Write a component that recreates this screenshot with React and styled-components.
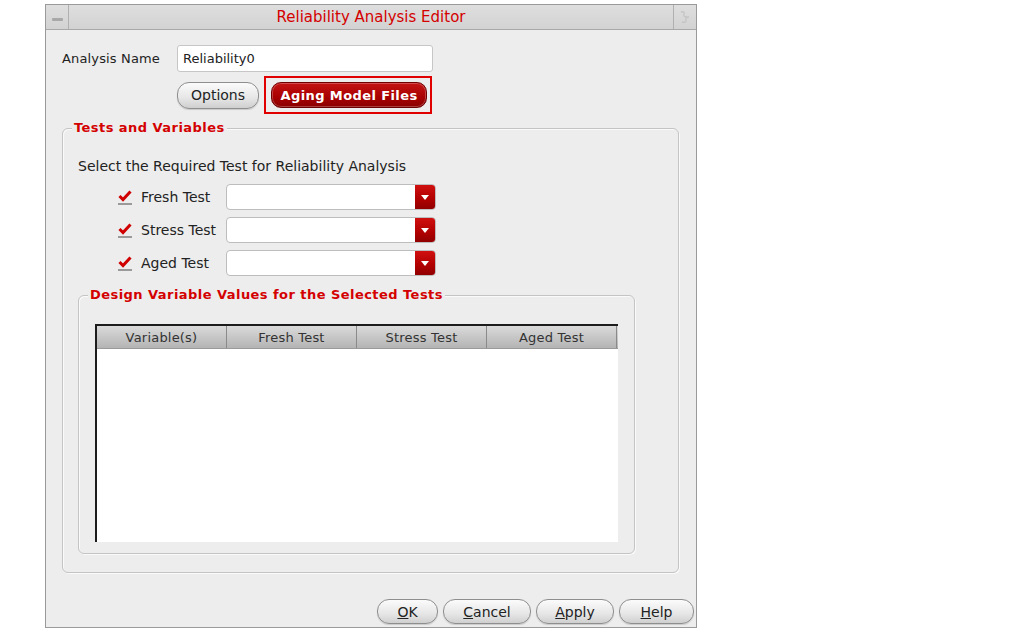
import React from "react"
import styled, { createGlobalStyle } from "styled-components"

const GlobalStyle = createGlobalStyle`
  body {
    margin: 0;
    background: #ffffff;
    font-family: "DejaVu Sans", "Liberation Sans", sans-serif;
  }
`

const Page = styled.div`
  width: 1013px;
  height: 631px;
  padding: 4px 0 0 45px;
  box-sizing: border-box;
`

const Window = styled.div`
  width: 652px;
  height: 624px;
  box-sizing: border-box;
  border: 1px solid #9a9a9a;
  background: #ededed;
  display: flex;
  flex-direction: column;
`

const TitleBar = styled.div`
  height: 24px;
  flex-shrink: 0;
  display: flex;
  border-bottom: 1px solid #a8a8a8;
  background: linear-gradient(#dedede, #d2d2d2);
`

const TitleButton = styled.div`
  width: 22px;
  display: flex;
  align-items: center;
  justify-content: center;
  border-${(p) => (p.$right ? "left" : "right")}: 1px solid #b0b0b0;
`

const Dash = styled.div`
  width: 11px;
  height: 3px;
  background: #a8a8a8;
  border-radius: 1px;
  margin-top: 4px;
`

const Title = styled.div`
  flex: 1;
  text-align: center;
  line-height: 24px;
  color: #d40000;
  font-size: 15px;
`

const Body = styled.div`
  flex: 1;
  display: flex;
  flex-direction: column;
  padding: 15px 0 3px 16px;
  min-height: 0;
`

const NameRow = styled.div`
  display: flex;
  align-items: center;
  gap: 17px;
`

const Label = styled.span`
  font-size: 13px;
  letter-spacing: 0.15px;
  color: #222;
`

const TextInput = styled.div`
  width: 256px;
  height: 27px;
  box-sizing: border-box;
  background: #fff;
  border: 1px solid #c6c6c6;
  border-radius: 3px;
  padding: 0 5px;
  display: flex;
  align-items: center;
  font-size: 13px;
  color: #222;
`

const ButtonsRow = styled.div`
  display: flex;
  align-items: center;
  margin: 4px 0 0 115px;
  gap: 5px;
`

const PillButton = styled.div`
  height: ${(p) => p.$h || 27}px;
  width: ${(p) => p.$w}px;
  box-sizing: border-box;
  border: 1px solid #8e8e8e;
  border-radius: 12px;
  background: linear-gradient(#fbfbfb, #e6e6e6 60%, #cfcfcf);
  box-shadow: 0 1px 1px rgba(0, 0, 0, 0.15);
  display: flex;
  align-items: center;
  justify-content: center;
  font-size: 14px;
  color: #222;
`

const Highlight = styled.div`
  border: 2px solid #e00000;
  padding: 4px 3px 4px 5px;
`

const RedButton = styled.div`
  height: 26px;
  width: 156px;
  box-sizing: border-box;
  border-radius: 10px;
  background: linear-gradient(#c41414, #a80000 60%, #8a0000);
  border: 1px solid #700000;
  box-shadow: inset 0 0 0 1px rgba(255, 255, 255, 0.25);
  display: flex;
  align-items: center;
  justify-content: center;
  color: #fff;
  font-weight: bold;
  font-size: 13px;
  letter-spacing: 0.4px;
`

const Group = styled.div`
  position: relative;
  flex: ${(p) => (p.$grow ? 1 : "none")};
  margin: ${(p) => p.$m || "0"};
  padding: ${(p) => p.$p || "0"};
  border: 1px solid #c4c4c4;
  border-radius: 6px;
  box-shadow: inset 1px 1px 0 #fafafa, 1px 1px 0 #fafafa;
  display: flex;
  flex-direction: column;
  min-height: 0;
`

const Legend = styled.span`
  position: absolute;
  top: -9px;
  left: 9px;
  padding: 0 2px;
  background: #ededed;
  color: #d40000;
  font-weight: bold;
  font-size: 13px;
  letter-spacing: 0.45px;
  line-height: 16px;
`

const Prompt = styled.div`
  font-size: 14px;
  line-height: 17px;
  color: #222;
  margin: 0 0 9px 0;
`

const TestRow = styled.div`
  display: flex;
  align-items: center;
  height: 26px;
  margin-bottom: 7px;
  padding-left: 40px;
`

const Check = styled.div`
  width: 14px;
  height: 14px;
  border-bottom: 2px solid #9a9a9a;
  margin-right: 9px;
  display: flex;
  align-items: center;
  justify-content: center;
`

const TestLabel = styled.span`
  width: 85px;
  font-size: 14px;
  color: #222;
`

const Combo = styled.div`
  width: 210px;
  height: 26px;
  display: flex;
  box-sizing: border-box;
  border: 1px solid #bdbdbd;
  border-radius: 4px;
  background: #fff;
  overflow: hidden;
`

const ComboField = styled.div`
  flex: 1;
`

const ComboArrow = styled.div`
  width: 20px;
  background: linear-gradient(#d01010, #b00000 60%, #900000);
  display: flex;
  align-items: center;
  justify-content: center;
`

const Table = styled.div`
  flex: 1;
  background: #fff;
  border-top: 2px solid #1c1c1c;
  border-left: 2px solid #1c1c1c;
  display: flex;
  flex-direction: column;
`

const HeaderRow = styled.div`
  display: grid;
  grid-template-columns: 130px 130px 130px 130px 1fr;
  height: 22px;
  background: linear-gradient(#dadada, #b4b4b4);
  border-bottom: 1px solid #9a9a9a;
`

const HeaderCell = styled.div`
  display: flex;
  align-items: center;
  justify-content: center;
  font-size: 13px;
  letter-spacing: 0.2px;
  color: #333;
  border-right: 1px solid #8a8a8a;
`

const Footer = styled.div`
  margin-top: 26px;
  display: flex;
  justify-content: flex-end;
  gap: 5px;
  padding-right: 2px;
`

const Mnemonic = styled.span`
  text-decoration: underline;
`

const CheckMark = () => (
  <svg width="14" height="12" viewBox="0 0 14 12">
    <path d="M1.5 6 L5 9.5 L12.5 1.5" fill="none" stroke="#d00000" strokeWidth="3" />
  </svg>
)

const MaxIcon = () => (
  <svg width="12" height="14" viewBox="0 0 12 14">
    <path d="M2 2 Q6 1 5 4 Q4 7 8 7 M10 7 Q6 7 7 10 Q8 13 3 12" fill="none" stroke="#c4c4c4" strokeWidth="1.3" />
  </svg>
)

const tests = ["Fresh Test", "Stress Test", "Aged Test"]

const App = () => {
  return (
    <Page>
      <GlobalStyle />
      <Window>
        <TitleBar>
          <TitleButton>
            <Dash />
          </TitleButton>
          <Title>Reliability Analysis Editor</Title>
          <TitleButton $right>
            <MaxIcon />
          </TitleButton>
        </TitleBar>
        <Body>
          <NameRow>
            <Label>Analysis Name</Label>
            <TextInput>Reliability0</TextInput>
          </NameRow>
          <ButtonsRow>
            <PillButton $w={82}>Options</PillButton>
            <Highlight>
              <RedButton>Aging Model Files</RedButton>
            </Highlight>
          </ButtonsRow>
          <Group $grow $m="14px 17px 0 0" $p="29px 15px 18px 15px">
            <Legend>Tests and Variables</Legend>
            <Prompt>Select the Required Test for Reliability Analysis</Prompt>
            {tests.map((t) => (
              <TestRow key={t}>
                <Check>
                  <CheckMark />
                </Check>
                <TestLabel>{t}</TestLabel>
                <Combo>
                  <ComboField />
                  <ComboArrow>
                    <svg width="8" height="5" viewBox="0 0 8 5">
                      <path d="M0 0 H8 L4 5 Z" fill="#fff" />
                    </svg>
                  </ComboArrow>
                </Combo>
              </TestRow>
            ))}
            <Group $grow $m="12px 28px 0 0" $p="28px 16px 11px 16px">
              <Legend>Design Variable Values for the Selected Tests</Legend>
              <Table>
                <HeaderRow>
                  <HeaderCell>Variable(s)</HeaderCell>
                  <HeaderCell>Fresh Test</HeaderCell>
                  <HeaderCell>Stress Test</HeaderCell>
                  <HeaderCell>Aged Test</HeaderCell>
                  <div />
                </HeaderRow>
              </Table>
            </Group>
          </Group>
          <Footer>
            <PillButton $w={61} $h={25}>
              <Mnemonic>O</Mnemonic>K
            </PillButton>
            <PillButton $w={88} $h={25}>
              <Mnemonic>C</Mnemonic>ancel
            </PillButton>
            <PillButton $w={78} $h={25}>
              <Mnemonic>A</Mnemonic>pply
            </PillButton>
            <PillButton $w={75} $h={25}>
              <Mnemonic>H</Mnemonic>elp
            </PillButton>
          </Footer>
        </Body>
      </Window>
    </Page>
  )
}

export default App
